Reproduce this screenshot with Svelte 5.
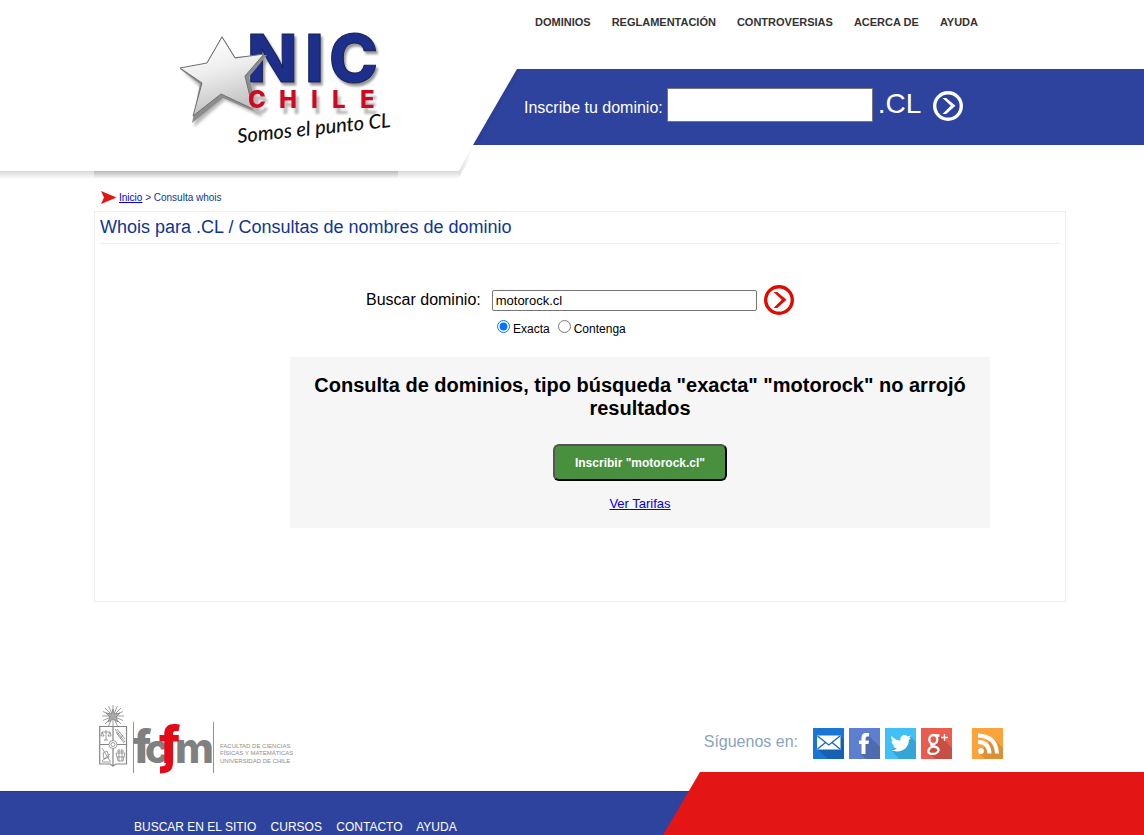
<script>
  const topLinks = ['DOMINIOS', 'REGLAMENTACIÓN', 'CONTROVERSIAS', 'ACERCA DE', 'AYUDA'];
  const bottomLinks = ['BUSCAR EN EL SITIO', 'CURSOS', 'CONTACTO', 'AYUDA'];
  let nuevo = $state('');
  let dominio = $state('motorock.cl');
  let tipo = $state('exacta');
  const hold = (e) => e.preventDefault();
</script>

{#snippet arrow()}
  <svg viewBox="0 0 30 30" width="30" height="30" fill="none" stroke="currentColor" aria-hidden="true">
    <circle cx="15" cy="15" r="13.3" stroke-width="3.4" />
    <path fill="currentColor" stroke="none" d="M9.5 7H13.2L22.5 14.7L13.2 23H9.5L17.8 14.7Z" />
  </svg>
{/snippet}

<header>
  <div class="brand">
    <a class="logo" href="#inicio" aria-label="NIC Chile">
      <svg viewBox="0 0 304 171" width="304" height="171">
        <defs>
          <linearGradient id="steel" x1="0" y1="0" x2="0.3" y2="1">
            <stop offset="0.1" stop-color="#fff" />
            <stop offset="0.5" stop-color="#eee" />
            <stop offset="1" stop-color="#c2c2c2" />
          </linearGradient>
          <filter id="soft" x="-20%" y="-20%" width="140%" height="150%"><feGaussianBlur stdDeviation="1.6" /></filter>
        </defs>
        <path fill="#999" opacity="0.7" filter="url(#soft)" d="M130 41L141 61L176 58L160 80L168 117L131 100L100 127L106 87L90 72L115 65Z" />
        <g font-family="Inter, sans-serif">
          <text class="nic" font-size="66" font-weight="800" x="153 211 235" y="82">NIC</text>
        </g>
        <path fill="#8d8d8d" d="M128 36L141 57L173 55L155 77L164 113L129 98L98 123L106 84L86 69L112 64Z" />
        <path fill="url(#steel)" stroke="#707070" d="M128 37L141 58L170 54L151 76L159 109L127 94L99 116L108 83L86 68L113 63Z" />
        <text class="chile" font-family="Inter, sans-serif" font-size="24" font-weight="800" x="154 185 217 238 266" y="108">CHILE</text>
        <text font-family="Lato, sans-serif" font-size="20" font-style="italic" font-weight="500" fill="#111" transform="translate(144 143) rotate(-6)">Somos el punto CL</text>
      </svg>
      <span class="logo-shadow"></span>
    </a>
  </div>
  <nav class="top" aria-label="Principal">
    {#each topLinks as item}<a href="#menu" onclick={hold}>{item}</a>{/each}
  </nav>
  <form class="band" onsubmit={hold}>
    <label for="nuevo">Inscribe tu dominio:</label>
    <input id="nuevo" type="text" bind:value={nuevo} />
    <span class="tld">.CL</span>
    <button class="go" aria-label="Inscribir">{@render arrow()}</button>
  </form>
  <div class="edge" aria-hidden="true">
    <span class="edge-line"></span>
    <svg viewBox="0 0 14 34" width="14" height="34">
      <defs>
        <linearGradient id="fade" x1="0" y1="0" x2="1" y2="0.6">
          <stop offset="0.25" stop-color="#cfcfcf" />
          <stop offset="0.75" stop-color="#fff" />
        </linearGradient>
      </defs>
      <path fill="url(#fade)" d="M14 0V12L3 27L0 32V26Z" />
    </svg>
  </div>
</header>

<main>
  <p class="crumbs">
    <svg viewBox="0 0 16 14" width="16" height="14" aria-hidden="true"><path fill="#e31515" d="M0 0L15.500 6.500L0 13L3 6.500Z" /></svg>
    <span><a href="#inicio">Inicio</a> &gt; Consulta whois</span>
  </p>
  <section class="card">
    <h1>Whois para .CL / Consultas de nombres de dominio</h1>
    <div class="body">
      <form onsubmit={hold}>
        <div class="search">
          <label for="buscar">Buscar dominio:</label>
          <input id="buscar" type="text" bind:value={dominio} />
          <button class="go red" aria-label="Buscar">{@render arrow()}</button>
        </div>
        <div class="kinds">
          <label><input type="radio" name="tipo" value="exacta" bind:group={tipo} />Exacta</label>
          <label><input type="radio" name="tipo" value="contenga" bind:group={tipo} />Contenga</label>
        </div>
      </form>
      <div class="result">
        <h2>Consulta de dominios, tipo búsqueda "exacta" "motorock" no arrojó resultados</h2>
        <button class="register">Inscribir "motorock.cl"</button>
        <a href="#tarifas">Ver Tarifas</a>
      </div>
    </div>
  </section>
</main>

<footer>
  <div class="partners">
    <a class="fcfm" href="#fcfm" aria-label="Facultad de Ciencias Físicas y Matemáticas">
      <svg viewBox="0 0 194 72" width="194" height="72">
        <g fill="none" stroke="#858585" stroke-width="0.8">
          <path d="M14 1V23M3 12H25M6 4L22 20M22 4L6 20M9.500 2L18.500 22M18.500 2L9.500 22M4 7.500L24 16.500M24 7.500L4 16.500" />
          <path fill="#aaa" d="M14 5L15.500 10L21 9L17 13L19 18L14 15L9 18L11 13L7 9L12.500 10Z" />
          <path stroke-width="1.200" d="M.7 22.500H27.500V60H17L14 62L11 60H.7ZM14 22.500V61M.7 40.500H27.500" />
          <circle cx="14" cy="40.500" r="4" fill="#fff" /><circle cx="14" cy="40.500" r="2" />
          <path d="M3 28H11M7 26V36M5 36H9M3 28L2 32H5ZM11 28L9 32H12ZM16 25L26 38M18 25L26 35M17 28L25 39M18 31L21 28M21 35L24 31" />
          <path d="M3 44L11 57M11 50L3 57M4 49L8 47L10 53L5 55ZM3 58H12M17 49H26L24 57H19ZM18 53H25M20 45V57M23 45V57M18 47H25" />
          <path stroke="#777" d="M34.500 18V69M114.500 18V69" />
        </g>
        <g font-family="Inter, sans-serif" font-weight="800" fill="#808080">
          <text font-size="45" x="34" y="59">f</text>
          <text font-size="40" x="46" y="59">c</text>
          <text font-size="42" x="76" y="59">m</text>
          <text font-size="52" x="60" y="59" fill="#e30b17">f</text>
        </g>
        <path fill="none" stroke="#e30b17" stroke-width="7" d="M70.500 54V59Q70.500 66 61 66" />
        <g font-family="Liberation Sans, sans-serif" font-size="6" fill="#8c8c8c">
          <text x="121" y="44">FACULTAD DE CIENCIAS</text>
          <text x="121" y="51">FÍSICAS Y MATEMÁTICAS</text>
          <text x="121" y="59">UNIVERSIDAD DE CHILE</text>
        </g>
      </svg>
    </a>
    <div class="social">
      <span>Síguenos en:</span>
      <a href="#correo" aria-label="Correo">
        <svg viewBox="0 0 31 31" width="31" height="31"><path fill="#1976d2" d="M0 0H31V31H0Z" /><path fill="#1562b2" d="M27 8L31 12V31H15L4 21Z" /><path fill="#fff" d="M4 7.500H27.500V21.500H4Z" /><path fill="none" stroke="#1765b5" stroke-width="1.300" d="M4.500 8L15.800 17L27 8M4.500 21L12.500 14.500M27 21L19 14.500" /></svg>
      </a>
      <a href="#facebook" aria-label="Facebook">
        <svg viewBox="0 0 31 31" width="31" height="31"><path fill="#5c7fd0" d="M0 0H31V31H0Z" /><path fill="#4d6bae" d="M19 7L31 19V31H17L12 26Z" /><path fill="#fff" d="M12.500 26V16H10V12.500H12.500V10Q12.500 5 17 5H20V8.500H18Q16.500 8.500 16.500 10.500V12.500H20L19.500 16H16.500V26Z" /></svg>
      </a>
      <a href="#twitter" aria-label="Twitter">
        <svg viewBox="0 0 31 31" width="31" height="31"><path fill="#41c0f5" d="M0 0H31V31H0Z" /><path fill="#34a5d6" d="M25 8L31 14V31H14L6 22Z" /><path fill="#fff" d="M6.500 8Q10.500 12.500 15.500 12.500C14.500 8.500 19 5 22.500 8.500L25.800 7.500L24 10L26 9.800L23.800 12.200C24 20 16 26 6 22.300Q9.500 22.500 12 20.500Q9 20 8 17.500H10Q6.500 16 6.500 13L8.500 13.500Q5.500 11 6.500 8Z" /></svg>
      </a>
      <a href="#google" aria-label="Google+">
        <svg viewBox="0 0 31 31" width="31" height="31"><path fill="#ea5c4d" d="M0 0H31V31H0Z" /><path fill="#c74e42" d="M19 8L31 20V31H14L8 24Z" /><g fill="none" stroke="#fff" stroke-width="2.300"><ellipse cx="12.300" cy="11.500" rx="4" ry="4.500" /><path d="M14 7.500H18.500M11 15.500Q9 18 13 18.500Q18 19.500 17.500 22.500C16 27 7 27 7.300 23Q8 19.500 12 18.500" /></g><path stroke="#fff" stroke-width="1.300" d="M20 9.500H27M23.500 6V13" /></svg>
      </a>
      <a class="rss" href="#rss" aria-label="RSS">
        <svg viewBox="0 0 31 31" width="31" height="31"><path fill="#fba43b" d="M0 0H31V31H0Z" /><path fill="#dc9036" d="M21 10L31 20V31H13L7 25Z" /><circle cx="9" cy="23" r="2.900" fill="#fff" /><path fill="none" stroke="#fff" stroke-width="4" d="M6 14Q17 14 17.500 25.500M6 7.500Q24 8 25 25.500" /></svg>
      </a>
    </div>
  </div>
  <div class="base">
    <nav aria-label="Pie">
      <div class="links">
        {#each bottomLinks as item}<a href="#pie" onclick={hold}>{item}</a>{' '}{/each}
      </div>
    </nav>
    <div class="wedge"></div>
  </div>
</footer>

<style>
  :global(body) { background: #fff; font-family: "Liberation Sans", Arial, sans-serif; color: #000; }
  svg { display: block; }
  header { display: grid; grid-template-columns: calc(50% - 99px) 1fr; grid-template-rows: 69px 76px 34px; }
  .brand { grid-column: 1; grid-row: 1 / 4; display: flex; justify-content: flex-end; padding-right: 75px; z-index: 1; }
  .logo-shadow { display: block; height: 8px; background: linear-gradient(#b8b8b8, #fff); }
  .nic { fill: #1d2f8b; stroke: #162252; stroke-width: 1px; filter: drop-shadow(2px 3px 1px #999); }
  .chile { fill: #cf0a20; filter: drop-shadow(3px 6px 1px #bbb); }
  .top { grid-column: 2; grid-row: 1; display: flex; gap: 21px; padding: 16px 0 0 62px; font-size: 11px; line-height: 13px; font-weight: bold; white-space: nowrap; }
  .top a { color: #333; text-decoration: none; }
  .band { grid-column: 2; grid-row: 2; display: flex; align-items: center; padding-left: 51px; background: linear-gradient(120deg, #253681 32px, #2e439e 43px); clip-path: polygon(44px 0, 100% 0, 100% 100%, 0 100%); color: #fff; }
  .band label { margin-right: 4px; padding-top: 2px; font-size: 16px; line-height: 18px; }
  .band input { box-sizing: border-box; width: 206px; height: 34px; margin-bottom: 4px; border: 1px solid #767676; padding: 1px 2px; font: 20px "Liberation Sans", sans-serif; }
  .tld { margin: 0 12px 6px 5px; font-size: 28px; line-height: 32px; }
  .go { padding: 0; border: 0; background: none; color: #fff; cursor: pointer; }
  .band .go { margin-bottom: 2px; }
  .edge { grid-column: 1; grid-row: 3; display: flex; align-items: flex-end; }
  .edge-line { flex: 1; height: 8px; background: linear-gradient(#d8d8d8, #fff); }

  main { max-width: 972px; margin: 0 auto; padding-left: 16px; }
  .crumbs { display: flex; align-items: center; gap: 2px; height: 14px; margin: 0; padding: 12px 0 6px 7px; font-size: 10px; line-height: 12px; color: #0d3692; }
  a { color: #00e; }
  .card { box-sizing: border-box; min-height: 391px; border: 1px solid #eee; padding: 5px 5px 73px; }
  h1 { margin: 0; padding-bottom: 6px; border-bottom: 1px solid #eee; font-size: 18px; line-height: 20px; font-weight: normal; color: #0d3692; }
  .body { max-width: 700px; margin: 0 auto; padding: 41px 0 0 120px; }
  .search { display: flex; align-items: center; padding-left: 76px; }
  .search label { margin-right: 11px; font-size: 16px; line-height: 18px; }
  .search input { box-sizing: border-box; width: 265px; height: 21px; margin-right: 7px; border: 1px solid #767676; border-radius: 2px; padding: 1px 3px; font: 13px "Liberation Sans", sans-serif; }
  .red { color: #e10a00; }
  .kinds { display: flex; gap: 8px; padding: 5px 0 20px 207px; font-size: 12px; line-height: 16px; }
  .kinds label { display: flex; align-items: flex-end; }
  .kinds input { width: 13px; height: 13px; margin: 0 3px 4px 0; }
  .result { display: flex; flex-direction: column; align-items: center; padding: 17px 16px; background: #f6f6f6; text-align: center; font-size: 13px; line-height: 15px; }
  h2 { margin: 0 0 24px; font-size: 20px; line-height: 23px; }
  .register { height: 37px; margin-bottom: 15px; padding: 0 20px; border: 2px outset #000; border-radius: 6px; background: #48903e; color: #fff; font: bold 12px "Liberation Sans", sans-serif; cursor: pointer; }

  footer { padding-top: 102px; }
  .partners { display: flex; justify-content: space-between; align-items: flex-start; max-width: 904px; margin: 0 auto; padding: 0 63px 0 21px; height: 68px; }
  .social { display: flex; align-items: center; gap: 5px; padding-top: 24px; font-size: 16px; line-height: 18px; color: #8ba3bd; }
  .social span { margin: 0 10px 4px 0; }
  .rss { margin-left: 15px; }
  .base { display: grid; }
  .base nav { grid-area: 1 / 1; margin-top: 19px; border-top: 1px solid #263a91; background: #2e439e; }
  .links { max-width: 932px; margin: 0 auto; padding: 28px 0 1px 56px; font-size: 12px; line-height: 14px; white-space: nowrap; }
  .links a { margin-right: 11px; color: #fff; text-decoration: none; }
  .wedge { grid-area: 1 / 1; margin-left: calc(50% + 91px); background: #e31515; clip-path: polygon(37px 0, 100% 0, 100% 100%, 0 100%); }
</style>
